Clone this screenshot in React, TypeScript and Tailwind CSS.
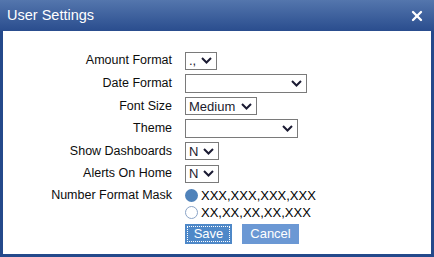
import { X } from 'lucide-react'

const font = { fontFamily: '"Liberation Sans", Arial, sans-serif' }

function Chevron() {
  return (
    <svg width="11" height="7" viewBox="0 0 11 7" className="shrink-0">
      <path d="M1 1 L5.5 5.5 L10 1" fill="none" stroke="#1b1b33" strokeWidth="2" />
    </svg>
  )
}

function Select({ value = '', width, h = 'h-[18px]' }: { value?: string; width: string; h?: string }) {
  return (
    <div className={`${width} ${h} flex items-center justify-between border border-[#7a7a7a] bg-white pl-[3px] pr-[4px]`}>
      <span className="text-[13px] leading-none text-[#1a1a2e]">{value}</span>
      <Chevron />
    </div>
  )
}

function Row({ label, h, children }: { label: string; h: string; children: React.ReactNode }) {
  return (
    <div className={`grid grid-cols-[169px_1fr] gap-x-[13px] items-center ${h}`}>
      <div className="text-right text-[12.5px] text-[#0d0d0d]">{label}</div>
      <div className="flex">{children}</div>
    </div>
  )
}

export default function App() {
  return (
    <div style={font} className="w-[434px] h-[257px] flex flex-col bg-[#24498b]">
      {/* title bar */}
      <div className="h-[31px] shrink-0 flex items-center justify-between pl-[7px] pr-[9px] bg-gradient-to-b from-[#5476ad] to-[#2a4d8e]">
        <span className="text-[14.5px] text-white">User Settings</span>
        <X size={16} strokeWidth={3.5} color="white" />
      </div>

      {/* body */}
      <div className="flex-1 mx-[3px] mb-[3px] bg-white pt-[18px]">
        <Row label="Amount Format" h="h-[23px]">
          <Select value=".," width="w-[32px]" />
        </Row>
        <Row label="Date Format" h="h-[23px]">
          <Select width="w-[122px]" h="h-[19px]" />
        </Row>
        <Row label="Font Size" h="h-[22px]">
          <Select value="Medium" width="w-[72px]" />
        </Row>
        <Row label="Theme" h="h-[23px]">
          <Select width="w-[113px]" h="h-[19px]" />
        </Row>
        <Row label="Show Dashboards" h="h-[22px]">
          <Select value="N" width="w-[34px]" />
        </Row>
        <Row label="Alerts On Home" h="h-[23px]">
          <Select value="N" width="w-[34px]" />
        </Row>

        <div className="grid grid-cols-[169px_1fr] gap-x-[13px] items-start mt-[2px]">
          <div className="text-right text-[12.5px] text-[#0d0d0d] leading-[17px]">Number Format Mask</div>
          <div className="flex flex-col">
            <div className="flex items-center gap-[3px] h-[17px]">
              <span className="w-[13px] h-[13px] rounded-full bg-[#4f82ba]" />
              <span className="text-[13px] text-black">XXX,XXX,XXX,XXX</span>
            </div>
            <div className="flex items-center gap-[3px] h-[17px]">
              <span className="w-[13px] h-[13px] rounded-full border border-[#8aa3c6] bg-white" />
              <span className="text-[13px] text-black">XX,XX,XX,XX,XXX</span>
            </div>
            <div className="flex gap-[10px] mt-[3px]">
              <button className="w-[47px] h-[20px] p-[2px] bg-[#4e88c8]">
                <span className="flex h-full w-full items-center justify-center border border-dotted border-white text-[13px] text-white">
                  Save
                </span>
              </button>
              <button className="w-[57px] h-[20px] bg-[#6b98d4] text-[13px] text-white">Cancel</button>
            </div>
          </div>
        </div>
      </div>
    </div>
  )
}
